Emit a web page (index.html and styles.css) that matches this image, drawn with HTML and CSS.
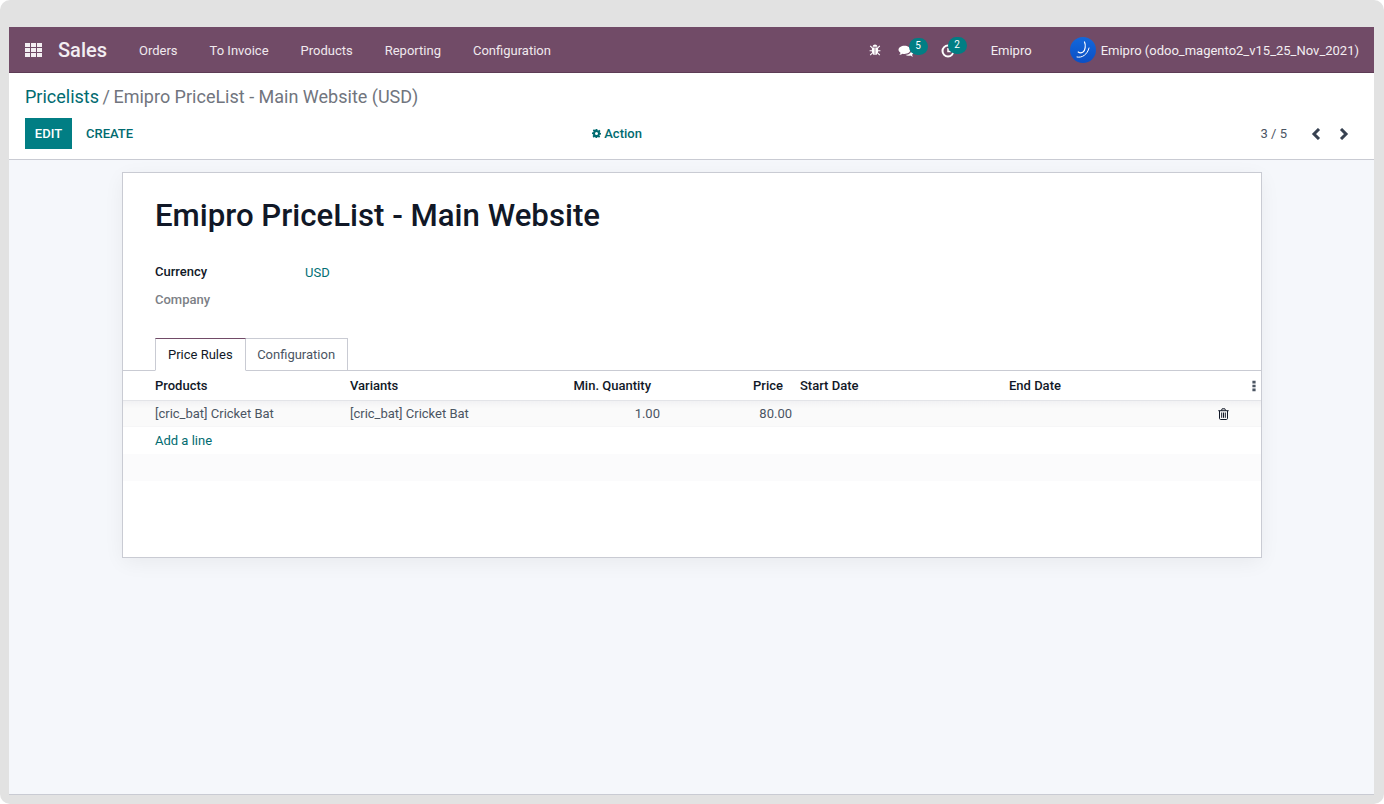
FILE: index.html
```html
<!DOCTYPE html>
<html lang="en">
<head>
  <meta charset="UTF-8">
  <title>Emipro PriceList - Main Website (USD)</title>
  <link rel="stylesheet" href="styles.css">
</head>
<body>
  <div class="frame">
    <div class="app">
      <header class="navbar">
        <svg class="apps-icon" viewBox="0 0 17 14" width="17" height="14">
          <path d="M0 0h5v4H0zM6 0h5v4H6zM12 0h5v4h-5zM0 5h5v4H0zM6 5h5v4H6zM12 5h5v4h-5zM0 10h5v4H0zM6 10h5v4H6zM12 10h5v4h-5z"/>
        </svg>
        <span class="brand">Sales</span>
        <nav class="menu">
          <a>Orders</a>
          <a>To Invoice</a>
          <a>Products</a>
          <a>Reporting</a>
          <a>Configuration</a>
        </nav>
        <div class="systray">
          <svg class="tray-icon bug" viewBox="0 0 12 12" width="12" height="12">
            <path d="M3.6 2.8C3.8 1.4 4.8.6 6 .6s2.2.8 2.4 2.2z"/>
            <path d="M2.9 3.5h2.8V11C4 10.8 2.9 9.5 2.9 7.5zM6.3 3.5h2.8v4c0 2-1.1 3.3-2.8 3.5z"/>
            <path d="M1.2 1.8l2 2M10.8 1.8l-2 2M.6 6.8h2.5M11.4 6.8H8.900M1.200 11.200l2-2M10.800 11.200l-2-2" fill="none" stroke="#fff" stroke-width="1.1"/>
          </svg>
          <span class="tray-item chat">
            <svg class="tray-icon" viewBox="0 0 16 13" width="16" height="13">
              <path d="M6.5.7c3.4 0 6 1.800 6 4.100s-2.600 4.100-6 4.100c-.7 0-1.300-.1-1.900-.2-.9.700-2 1.200-3.400 1.300.7-.7 1.200-1.500 1.300-2.300C1.200 6.900.5 5.900.5 4.800.5 2.500 3.100.7 6.500.7z"/>
              <path d="M13.500 4.400c1.200.7 2 1.700 2 2.900 0 1-.6 1.900-1.500 2.500.1.700.5 1.300 1.100 1.900-1.100-.1-2-.5-2.800-1.100-.5.100-1 .2-1.500.2-1.300 0-2.500-.4-3.300-1 3.500-.1 6.300-2.200 6-5.400z"/>
            </svg>
            <span class="badge">5</span>
          </span>
          <span class="tray-item clock">
            <svg class="tray-icon" viewBox="0 0 14 14" width="14" height="14">
              <circle cx="7" cy="7" r="5.5" fill="none" stroke="#fff" stroke-width="2"/>
              <path d="M7 4v3.5H10" fill="none" stroke="#fff" stroke-width="1.5"/>
            </svg>
            <span class="badge">2</span>
          </span>
          <span class="company">Emipro</span>
          <span class="user">
            <svg class="avatar" viewBox="0 0 26 26" width="26" height="26">
              <defs>
                <linearGradient id="avatarFill" x1="0" y1="0" x2="0" y2="1">
                  <stop offset="0" stop-color="#1268dc"/>
                  <stop offset="1" stop-color="#0b4fc4"/>
                </linearGradient>
              </defs>
              <circle cx="13" cy="13" r="13" fill="url(#avatarFill)"/>
              <path d="M14.5 5c1.500 3 .8 8.500-1.500 10-1.500.9-3.500.9-4.800 0" fill="none" stroke="#fff" stroke-width="1.2" stroke-linecap="round"/>
              <path d="M7 20c5 1.200 10.500-2.500 12-9" fill="none" stroke="#fff" stroke-width="1" stroke-linecap="round"/>
            </svg>
            Emipro (odoo_magento2_v15_25_Nov_2021)
          </span>
        </div>
      </header>

      <section class="control-panel">
        <div class="breadcrumb"><a>Pricelists</a><span class="sep">/</span>Emipro PriceList - Main Website (USD)</div>
        <div class="cp-row">
          <div class="cp-buttons">
            <button class="btn-primary">EDIT</button>
            <button class="btn-link">CREATE</button>
          </div>
          <div class="cp-action">
            <svg viewBox="0 0 12 12" width="9" height="9">
              <path fill-rule="evenodd" d="M4.9 0h2.200l.3 1.700 1 .4L9.800 1l1.500 1.500-1 1.400.4 1 1.300.3v2.200l-1.700.3-.4 1 1 1.400-1.500 1.500-1.400-1-1 .4-.3 1.700H4.900l-.3-1.700-1-.4-1.400 1L.7 9.400l1-1.400-.4-1L0 6.700V4.500l1.700-.3.400-1-1-1.400L2.600.3l1.400 1 .6-.3zM6 4a2 2 0 100 4 2 2 0 000-4z"/>
            </svg>
            Action
          </div>
          <div class="pager">
            <span class="pager-value">3 / 5</span>
            <svg class="pager-arrow" viewBox="0 0 10 12" width="10" height="12"><path d="M8 1L3 6l5 5"/></svg>
            <svg class="pager-arrow" viewBox="0 0 10 12" width="10" height="12"><path d="M2 1l5 5-5 5"/></svg>
          </div>
        </div>
      </section>

      <main class="content">
        <div class="sheet">
          <h1 class="title">Emipro PriceList - Main Website</h1>
          <div class="fields">
            <div class="field">
              <span class="field-label">Currency</span>
              <a class="field-value">USD</a>
            </div>
            <div class="field">
              <span class="field-label muted">Company</span>
            </div>
          </div>
          <div class="tabs">
            <span class="tab active">Price Rules</span>
            <span class="tab">Configuration</span>
          </div>
          <table class="rules">
            <thead>
              <tr>
                <th class="col-product">Products</th>
                <th class="col-variant">Variants</th>
                <th class="col-qty num">Min. Quantity</th>
                <th class="col-price num">Price</th>
                <th class="col-start">Start Date</th>
                <th class="col-end">End Date</th>
                <th class="col-opts">
                  <svg viewBox="0 0 4 12" width="4" height="12"><path d="M.4 .8h3.200v2.600H.4zM.4 4.700h3.200v2.600H.4zM.4 8.600h3.200v2.600H.4z"/></svg>
                </th>
              </tr>
            </thead>
            <tbody>
              <tr class="row-filled">
                <td class="col-product">[cric_bat] Cricket Bat</td>
                <td class="col-variant">[cric_bat] Cricket Bat</td>
                <td class="num">1.00</td>
                <td class="num price-cell">80.00</td>
                <td></td>
                <td></td>
                <td class="col-trash">
                  <svg viewBox="0 0 11 12" width="11" height="12">
                    <path d="M1.500 3v7.300c0 .7.400 1.200 1 1.200h6c.6 0 1-.5 1-1.200V3M.3 2.700h10.400M3.500 2.500l.6-1.700h2.800l.6 1.700M3.700 4.500v5.300M5.500 4.500v5.300M7.300 4.500v5.300" fill="none" stroke="#111827" stroke-width="1"/>
                  </svg>
                </td>
              </tr>
              <tr>
                <td class="col-product" colspan="7"><a class="add-line">Add a line</a></td>
              </tr>
              <tr class="row-stripe"><td colspan="7"></td></tr>
            </tbody>
          </table>
        </div>
      </main>
    </div>
  </div>
</body>
</html>
```

FILE: styles.css
```css
* {
  box-sizing: border-box;
}

html,
body {
  margin: 0;
  height: 100%;
  background: #fff;
  overflow: hidden;
}

body {
  font-family: Roboto, "Noto Sans", sans-serif;
  font-size: 13px;
  color: #4c4c4c;
}

a {
  color: #016f75;
}

.frame {
  height: 804px;
  padding: 27px 10px 9px 9px;
  background: #e2e2e2;
  border-radius: 10px;
}

.app {
  display: flex;
  flex-direction: column;
  height: 100%;
  background: #f5f7fb;
  border-bottom: 1px solid #c9cbd3;
}

/* navbar */
.navbar {
  display: flex;
  align-items: center;
  flex: 0 0 46px;
  padding: 0 15px 0 16px;
  background: #714b67;
  border-bottom: 1px solid #5d3c55;
  color: #fff;
}

.apps-icon {
  fill: #f3eef2;
}

.brand {
  margin-left: 16px;
  font-size: 20px;
  font-weight: 500;
  color: #f3eef2;
}

.menu {
  display: flex;
  gap: 32px;
  margin-left: 32px;
  padding-top: 1px;
}

.menu a {
  color: #f0e9ee;
}

.systray {
  display: flex;
  align-items: center;
  margin-left: auto;
  padding-top: 1px;
  color: #f3eef2;
}

.tray-icon {
  display: block;
  fill: #fff;
}

.tray-item {
  position: relative;
  display: block;
}

.bug {
  margin-right: 17px;
}

.chat {
  margin-right: 27px;
  margin-top: 2px;
}

.clock {
  margin-right: 36px;
  margin-top: 2px;
}

.badge {
  position: absolute;
  top: -7px;
  left: 11px;
  width: 19px;
  height: 17px;
  border-radius: 9px;
  background: #017e84;
  color: #fff;
  font-size: 10px;
  line-height: 16px;
  text-align: center;
}

.clock .badge {
  left: 7px;
}

.company {
  margin-right: 38px;
}

.user {
  display: flex;
  align-items: center;
  gap: 5px;
}

/* control panel */
.control-panel {
  flex: 0 0 87px;
  padding: 11px 16px 0;
  background: #fff;
  border-bottom: 1px solid #c9cbd3;
}

.breadcrumb {
  height: 26px;
  font-size: 18px;
  line-height: 26px;
  color: #71757e;
}

.breadcrumb a {
  color: #016b70;
}

.sep {
  margin: 0 3.5px;
}

.cp-row {
  position: relative;
  display: flex;
  align-items: center;
  justify-content: space-between;
  height: 31px;
  margin-top: 8px;
}

.cp-buttons {
  display: flex;
  align-items: center;
}

.cp-buttons button {
  height: 31px;
  border: 0;
  font-family: inherit;
  font-size: 13px;
  font-weight: 500;
}

.btn-primary {
  width: 47px;
  padding: 0;
  background: #017e84;
  color: #fff;
}

.btn-link {
  padding: 0 14px;
  background: none;
  color: #016b70;
}

.cp-action {
  position: absolute;
  left: 567px;
  top: 8px;
  font-size: 13px;
  font-weight: 500;
  color: #016b70;
}

.cp-action svg {
  fill: #016b70;
}

.pager {
  display: flex;
  align-items: center;
  gap: 18px;
  padding-right: 9px;
}

.pager-value {
  margin-right: 6px;
  color: #4b5563;
}

.pager-arrow {
  fill: none;
  stroke: #374151;
  stroke-width: 3;
}

/* form sheet */
.content {
  flex: 1;
  padding: 12px 112px 0 113px;
}

.sheet {
  height: 386px;
  background: #fff;
  border: 1px solid #c9cbd3;
  box-shadow: 0 5px 20px -1px rgba(0, 0, 0, 0.06);
}

.title {
  margin: 0;
  padding: 24px 32px 0;
  font-size: 31.2px;
  line-height: 38px;
  font-weight: 500;
  color: #111827;
}

.fields {
  margin-top: 22px;
  padding: 0 32px;
}

.field {
  display: flex;
  align-items: center;
  height: 28px;
}

.field-label {
  width: 150px;
  font-weight: 500;
  color: #111827;
}

.field-label.muted {
  color: #7c7f86;
}

.field-value {
  margin-top: 2px;
}

.tabs {
  display: flex;
  height: 33px;
  margin-top: 25px;
  padding-left: 32px;
  border-bottom: 1px solid #c9cbd3;
}

.tab {
  height: 33px;
  padding: 0 12px 0 11.5px;
  border: 1px solid #c9cbd3;
  border-left: 0;
  line-height: 32px;
  color: #4b5563;
}

.tab.active {
  padding-left: 12px;
  background: #fff;
  border-left: 1px solid #c9cbd3;
  border-top-color: #714b67;
  border-bottom-color: #fff;
  color: #111827;
}

.rules {
  width: 100%;
  table-layout: fixed;
  border-collapse: collapse;
}

.rules th {
  height: 29px;
  padding: 0 8px;
  text-align: left;
  font-weight: 500;
  color: #111827;
  border-bottom: 1px solid #e3e4e8;
}

.rules td {
  height: 27px;
  padding: 0 8px;
  color: #4b5563;
}

.rules th.num {
  padding-right: 12px;
  text-align: right;
}

.rules .col-price.num {
  padding-right: 13px;
}

.rules td.num {
  padding-right: 3px;
  text-align: right;
}

.rules td.price-cell {
  padding-right: 4px;
}

.rules .col-product {
  width: 222px;
  padding-left: 32px;
}

.rules .col-variant {
  width: 182px;
  padding-left: 5px;
}

.rules .col-qty {
  width: 136px;
}

.rules .col-price {
  width: 133px;
}

.rules .col-start {
  width: 209px;
  padding-left: 4px;
}

.rules .col-end {
  width: 210px;
  padding-left: 4px;
}

.rules .col-opts {
  padding: 0 5px 0 0;
  text-align: right;
}

.col-opts svg {
  display: inline-block;
  vertical-align: middle;
  fill: #4b5563;
}

.rules .col-trash {
  padding: 0 0 0 3px;
}

.col-trash svg {
  display: block;
}

.row-filled td {
  background: linear-gradient(#f1f1f3, #fafafa 8px);
}

.add-line {
  color: #016b70;
}

.row-stripe td {
  background: #fbfbfc;
}
```
